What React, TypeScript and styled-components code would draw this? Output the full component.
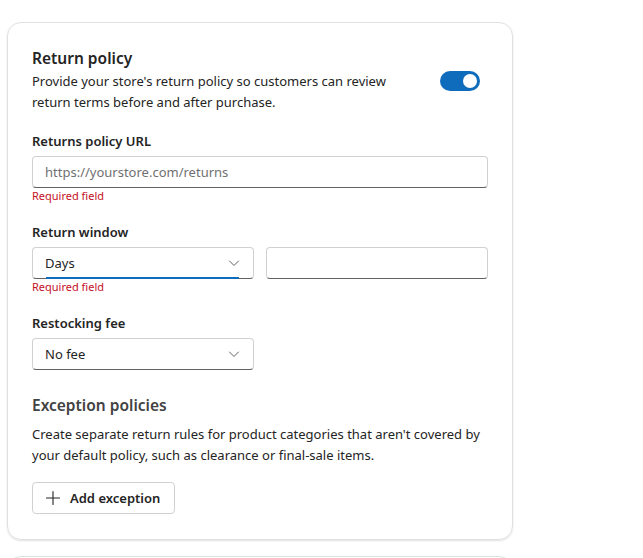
import React from 'react';
import styled, { createGlobalStyle } from 'styled-components';

const Global = createGlobalStyle`
  body {
    margin: 0;
    background: #ffffff;
    font-family: "Noto Sans", "Open Sans", sans-serif;
    color: #242424;
  }
`;

const Page = styled.div`
  padding: 22px 0 0 7px;
  width: 506px;
  display: flex;
  flex-direction: column;
  gap: 16px;
`;

const Card = styled.section<{ $stub?: boolean }>`
  border: 1px solid #e0e0e0;
  border-radius: 14px;
  box-shadow: 0 1px 2px rgba(0, 0, 0, 0.12);
  padding: ${(p) => (p.$stub ? '0' : '24px 24px 25px 24px')};
  height: ${(p) => (p.$stub ? '40px' : 'auto')};
  display: flex;
  flex-direction: column;
`;

const Header = styled.div`
  display: flex;
  justify-content: space-between;
  align-items: flex-start;
  gap: 24px;
`;

const Title = styled.h2<{ $muted?: boolean }>`
  margin: 0;
  font-size: 15.5px;
  font-weight: 600;
  line-height: 22px;
  color: ${(p) => (p.$muted ? '#424242' : '#242424')};
`;

const Desc = styled.p<{ $gap?: number }>`
  margin: ${(p) => p.$gap ?? 2}px 0 0;
  font-size: 13px;
  line-height: 21px;
  color: #242424;
`;

const Toggle = styled.div`
  width: 40px;
  height: 20px;
  border-radius: 10px;
  background: #0f6cbd;
  margin-top: 24px;
  margin-right: 8px;
  display: flex;
  align-items: center;
  justify-content: flex-end;
  padding-right: 3px;
  box-sizing: border-box;
  flex-shrink: 0;

  &::after {
    content: '';
    width: 14px;
    height: 14px;
    border-radius: 50%;
    background: #fff;
  }
`;

const Field = styled.div`
  margin-top: 18px;
  display: flex;
  flex-direction: column;
`;

const Label = styled.label`
  font-size: 13px;
  font-weight: 600;
  line-height: 20px;
  margin-bottom: 5px;
`;

const Row = styled.div`
  display: grid;
  grid-template-columns: 1fr 1fr;
  gap: 12px;
`;

const Box = styled.div<{ $half?: boolean; $focus?: boolean }>`
  position: relative;
  height: 32px;
  width: ${(p) => (p.$half ? '222px' : '456px')};
  box-sizing: border-box;
  border: 1px solid #d1d1d1;
  border-bottom-color: #616161;
  border-radius: 4px;
  display: flex;
  align-items: center;
  justify-content: space-between;
  padding: 0 12px;
  font-size: 13px;
  color: #242424;

  ${(p) =>
    p.$focus &&
    `&::after {
      content: '';
      position: absolute;
      left: 13px;
      right: 14px;
      bottom: -1px;
      height: 2px;
      background: #0f6cbd;
    }`}
`;

const Placeholder = styled.span`
  color: #707070;
`;

const Error = styled.span`
  font-size: 11px;
  line-height: 16px;
  color: #c50f1f;
`;

const Section = styled.div`
  margin-top: 24px;
  display: flex;
  flex-direction: column;
`;

const Button = styled.button`
  margin-top: 16px;
  align-self: flex-start;
  height: 32px;
  padding: 0 14px 0 12px;
  display: flex;
  align-items: center;
  gap: 9px;
  background: #fff;
  border: 1px solid #d1d1d1;
  border-radius: 4px;
  font-family: inherit;
  font-size: 13px;
  font-weight: 600;
  color: #242424;
`;

const Chevron = () => (
  <svg width="14" height="14" viewBox="0 0 14 14" fill="none">
    <path d="M2.5 5l4.5 4.5 4.5-4.5" stroke="#616161" strokeWidth="1" strokeLinecap="round" strokeLinejoin="round" />
  </svg>
);

const Plus = () => (
  <svg width="16" height="16" viewBox="0 0 16 16" fill="none">
    <path d="M8 1.5v13M1.5 8h13" stroke="#242424" strokeWidth="1.1" strokeLinecap="round" />
  </svg>
);

export default function App() {
  return (
    <>
      <Global />
      <Page>
        <Card>
          <Header>
            <div>
              <Title>Return policy</Title>
              <Desc>
                Provide your store's return policy so customers can review
                <br />
                return terms before and after purchase.
              </Desc>
            </div>
            <Toggle />
          </Header>

          <Field>
            <Label>Returns policy URL</Label>
            <Box>
              <Placeholder>https://yourstore.com/returns</Placeholder>
            </Box>
            <Error>Required field</Error>
          </Field>

          <Field>
            <Label>Return window</Label>
            <Row>
              <Box $half $focus>
                <span>Days</span>
                <Chevron />
              </Box>
              <Box $half />
            </Row>
            <Error>Required field</Error>
          </Field>

          <Field>
            <Label>Restocking fee</Label>
            <Box $half>
              <span>No fee</span>
              <Chevron />
            </Box>
          </Field>

          <Section>
            <Title $muted>Exception policies</Title>
            <Desc $gap={8}>
              Create separate return rules for product categories that aren't covered by
              <br />
              your default policy, such as clearance or final-sale items.
            </Desc>
            <Button>
              <Plus />
              Add exception
            </Button>
          </Section>
        </Card>
        <Card $stub />
      </Page>
    </>
  );
}
